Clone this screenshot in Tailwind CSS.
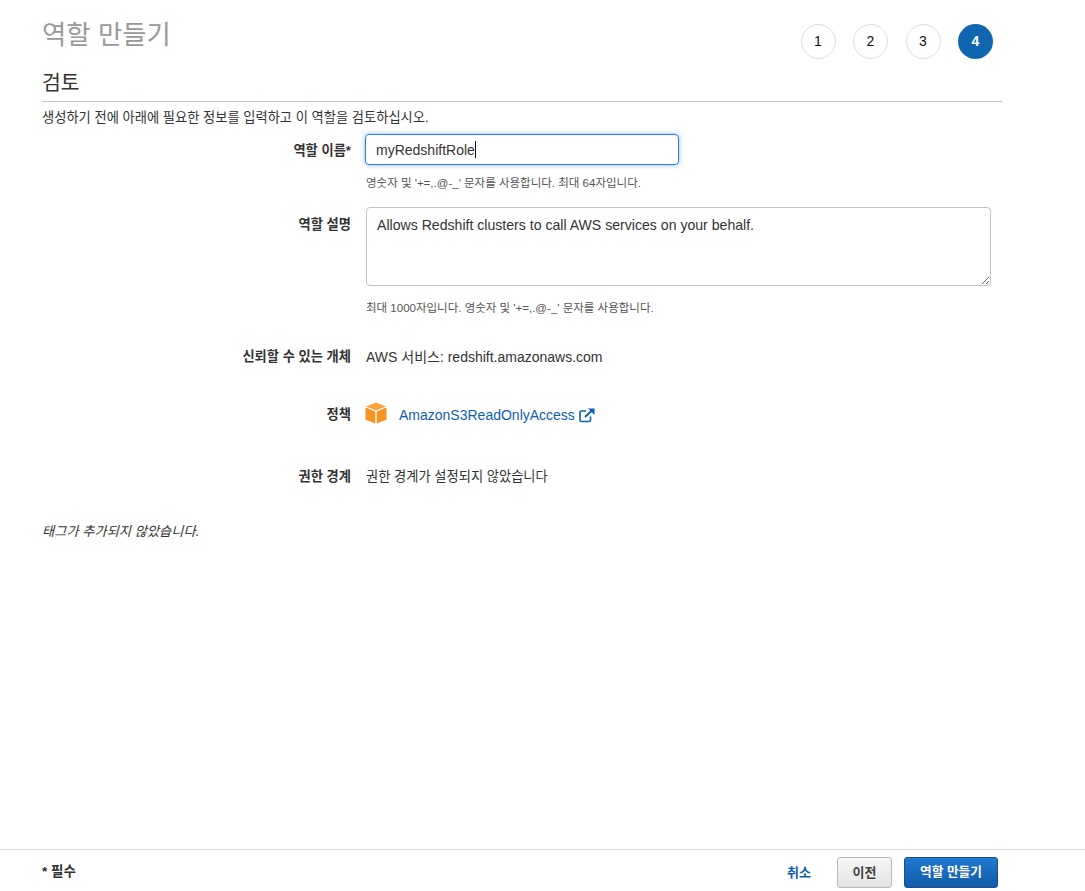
<!DOCTYPE html>
<html lang="ko">
<head>
    <meta charset="UTF-8">
    <title>역할 만들기</title>
    <script src="https://cdn.jsdelivr.net/npm/@tailwindcss/browser@4"></script>
</head>
<body class="bg-white h-[891px] overflow-hidden flex flex-col text-[#333] text-[13.25px] font-['Liberation_Sans','Noto_Sans_CJK_KR',sans-serif]">
    <main class="flex-1 pl-[42px] pr-[83px]">
        <div class="flex justify-between h-[59px]">
            <h1 class="text-[26.4px] leading-[32px] pt-[19px] text-[#999]">역할 만들기</h1>
            <div class="flex pt-[24px] pr-[9px] gap-[17.5px] text-[14px]">
                <span class="w-[35px] h-[35px] rounded-full border border-[#ddd] flex items-center justify-center text-[#111]">1</span>
                <span class="w-[35px] h-[35px] rounded-full border border-[#ddd] flex items-center justify-center text-[#111]">2</span>
                <span class="w-[35px] h-[35px] rounded-full border border-[#ddd] flex items-center justify-center text-[#111]">3</span>
                <span class="w-[35px] h-[35px] rounded-full bg-[#1166b1] flex items-center justify-center text-white font-bold">4</span>
            </div>
        </div>
        <h2 class="text-[20.5px] leading-[28px] pt-[11px] h-[44px] border-b border-[#c4c4c4] -mt-[1px]">검토</h2>
        <p class="mt-[8px] leading-[16px]">생성하기 전에 아래에 필요한 정보를 입력하고 이 역할을 검토하십시오.</p>

        <div class="mt-[8px]">
            <div class="flex">
                <label class="w-[309px] text-right font-bold pt-[9px] leading-[16px]">역할 이름*</label>
                <div class="ml-[15px] relative">
                    <input type="text" value="myRedshiftRole" class="block -ml-[1px] w-[314px] h-[31px] px-[10px] rounded-[4px] border border-[#2a7de1] shadow-[0_0_5px_rgba(42,125,225,0.55)] text-[14px] text-[#333] outline-none">
                    <span class="absolute left-[109px] top-[7px] w-px h-[17px] bg-[#111]"></span>
                    <p class="mt-[10px] text-[11.5px] leading-[16px] text-[#555]">영숫자 및 '+=,.@-_' 문자를 사용합니다. 최대 64자입니다.</p>
                </div>
            </div>
            <div class="flex mt-[16px]">
                <label class="w-[309px] text-right font-bold pt-[10px] leading-[16px]">역할 설명</label>
                <div class="ml-[15px]">
                    <textarea class="block w-[625px] h-[79px] px-[10px] py-[8px] rounded-[4px] border border-[#c4c4c4] text-[14.1px] leading-[18px] text-[#333] outline-none">Allows Redshift clusters to call AWS services on your behalf.</textarea>
                    <p class="mt-[14px] text-[11.5px] leading-[16px] text-[#555]">최대 1000자입니다. 영숫자 및 '+=,.@-_' 문자를 사용합니다.</p>
                </div>
            </div>
            <div class="flex mt-[32px] leading-[18px]">
                <label class="w-[309px] text-right font-bold">신뢰할 수 있는 개체</label>
                <div class="ml-[15px] text-[14px]">AWS 서비스: redshift.amazonaws.com</div>
            </div>
            <div class="flex items-center mt-[37px] h-[24px]">
                <label class="w-[309px] text-right font-bold">정책</label>
                <div class="ml-[14px] flex items-center">
                    <svg class="-mt-[4px]" width="22" height="22" viewBox="0 0 22 22">
                        <path d="M11 0.5 L21 4.4 L11 8.3 L1 4.4 Z" fill="#f9a13a"/>
                        <path d="M0.5 5.6 L10.3 9.4 V21.5 L0.5 17.7 Z" fill="#f7931e"/>
                        <path d="M21.5 5.6 L11.7 9.4 V21.5 L21.5 17.7 Z" fill="#f7931e"/>
                    </svg>
                    <a class="ml-[12px] text-[14px] text-[#0b5fb0]">AmazonS3ReadOnlyAccess</a>
                    <svg class="ml-[4px]" width="16" height="15" viewBox="0 0 16 15" fill="none" stroke="#0b5fb0" stroke-width="1.6">
                        <path d="M7 3 H2.5 A1.5 1.5 0 0 0 1 4.5 V12 A1.5 1.5 0 0 0 2.5 13.5 H10 A1.5 1.5 0 0 0 11.5 12 V8.5"/>
                        <path d="M6 9 L13 2.5" stroke-width="2"/>
                        <path d="M9 0.5 H15.5 V7 Z" fill="#0b5fb0" stroke="none"/>
                    </svg>
                </div>
            </div>
            <div class="flex mt-[41px] leading-[18px]">
                <label class="w-[309px] text-right font-bold">권한 경계</label>
                <div class="ml-[15px]">권한 경계가 설정되지 않았습니다</div>
            </div>
        </div>
        <p class="mt-[37px] italic leading-[18px]">태그가 추가되지 않았습니다.</p>
    </main>
    <footer class="h-[42px] pt-[4px] border-t border-[#ddd] flex items-center pl-[42px] pr-[87px]">
        <span class="font-bold text-[13.5px] flex-1">* 필수</span>
        <a class="font-bold text-[#0b5fb0] text-[13px]">취소</a>
        <button class="ml-[26px] w-[55px] h-[31px] rounded-[3px] border border-[#bbb] bg-linear-to-b from-[#f6f6f6] to-[#e4e4e4] font-bold text-[13px] text-[#444]">이전</button>
        <button class="ml-[12px] w-[94px] h-[31px] rounded-[3px] border border-[#15508f] bg-linear-to-b from-[#2178d0] to-[#125ba8] font-bold text-[12.7px] text-white">역할 만들기</button>
    </footer>
</body>
</html>
